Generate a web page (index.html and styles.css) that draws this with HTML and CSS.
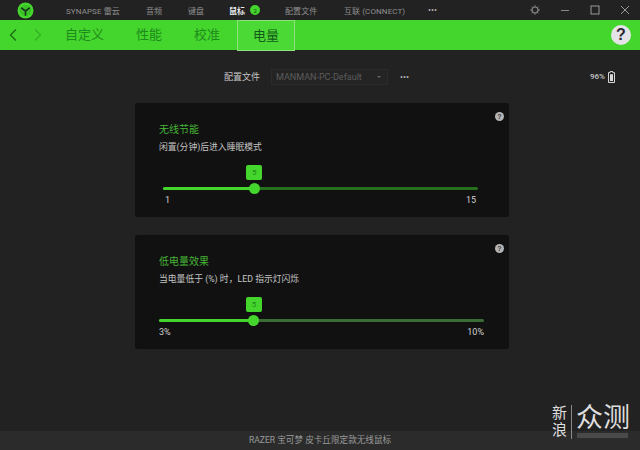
FILE: index.html
```html
<!DOCTYPE html>
<html lang="zh">
<head>
<meta charset="utf-8">
<title>Razer Synapse</title>
<link rel="stylesheet" href="styles.css">
</head>
<body>
<div class="app">
  <header class="titlebar">
    <svg class="logo" width="17" height="17" viewBox="0 0 17 17"><circle cx="8.5" cy="8.5" r="8" fill="#44d62c"/><circle cx="8.5" cy="8.5" r="5.6" fill="#3cc028"/><path d="M8.5 9V13.2M8.5 9L4.6 6.2M8.5 9L12.4 6.2" fill="none" stroke="#17351a" stroke-width="1.6" stroke-linecap="round"/></svg>
    <nav class="topnav">
      <span class="t-synapse">SYNAPSE 雷云</span>
      <span class="t-audio">音频</span>
      <span class="t-keys">键盘</span>
      <span class="t-mouse">鼠标<b class="badge">2</b></span>
      <span class="t-profile">配置文件</span>
      <span class="t-connect">互联 (CONNECT)</span>
      <span class="t-more">•••</span>
    </nav>
    <div class="winctl">
      <svg width="12" height="12" viewBox="0 0 12 12"><circle cx="6" cy="6" r="3" fill="none" stroke="#8a8a8a" stroke-width="1.2"/><path d="M6 1.2V2.8M6 9.2V10.8M1.2 6H2.8M9.2 6H10.8M2.6 2.6L3.7 3.7M8.3 8.3L9.4 9.4M2.6 9.4L3.7 8.3M8.3 3.7L9.4 2.6" stroke="#8a8a8a" stroke-width="1"/></svg>
      <svg width="10" height="10" viewBox="0 0 10 10"><path d="M1 5.5H9" stroke="#8a8a8a" stroke-width="1"/></svg>
      <svg width="10" height="10" viewBox="0 0 10 10"><rect x="1" y="1" width="8" height="8" fill="none" stroke="#9a9a9a" stroke-width="1"/></svg>
      <svg width="10" height="10" viewBox="0 0 10 10"><path d="M1 1L9 9M9 1L1 9" stroke="#9a9a9a" stroke-width="1"/></svg>
    </div>
  </header>

  <div class="greenbar">
    <svg class="arrow" width="8" height="14" viewBox="0 0 8 14"><path d="M7 1.5L1.5 7L7 12.5" fill="none" stroke="#1c6b18" stroke-width="1.3"/></svg>
    <svg class="arrow next" width="8" height="14" viewBox="0 0 8 14"><path d="M1 1.5L6.5 7L1 12.5" fill="none" stroke="#35b026" stroke-width="1.3"/></svg>
    <div class="tabs">
      <span class="tab">自定义</span>
      <span class="tab">性能</span>
      <span class="tab">校准</span>
      <span class="tab active">电量</span>
    </div>
    <span class="help">?</span>
  </div>

  <main class="content">
    <div class="profile-row">
      <span class="profile-label">配置文件</span>
      <div class="select"><span>MANMAN-PC-Default</span><i class="caret"></i></div>
      <span class="dots">•••</span>
      <div class="battery">
        <span>96%</span>
        <svg width="7" height="12" viewBox="0 0 7 12"><path d="M2.2.5H4.8V1.6H6.5V11.5H.5V1.6H2.2Z" fill="none" stroke="#d8d8d8" stroke-width="1"/><rect x="2" y="3.2" width="3" height="6.8" fill="#d8d8d8"/></svg>
      </div>
    </div>

    <section class="card first">
      <span class="q">?</span>
      <h2>无线节能</h2>
      <p>闲置(分钟)后进入睡眠模式</p>
      <div class="slider inset">
        <div class="track">
          <div class="fill" style="width:29%"></div>
          <span class="knob" style="left:29%"></span>
          <span class="bubble" style="left:29%">5</span>
        </div>
        <div class="ends"><span>1</span><span>15</span></div>
      </div>
    </section>

    <section class="card second">
      <span class="q">?</span>
      <h2>低电量效果</h2>
      <p>当电量低于 (%) 时，LED 指示灯闪烁</p>
      <div class="slider">
        <div class="track">
          <div class="fill" style="width:29.2%"></div>
          <span class="knob" style="left:29.2%"></span>
          <span class="bubble" style="left:29.2%">5</span>
        </div>
        <div class="ends"><span>3%</span><span>10%</span></div>
      </div>
    </section>
  </main>

  <footer class="footer">RAZER 宝可梦 皮卡丘限定款无线鼠标</footer>
  <div class="watermark">
    <span class="wm-small">新<br>浪</span>
    <span class="wm-big">众测<i class="wm-bar"></i></span>
  </div>
</div>
</body>
</html>
```

FILE: styles.css
```css
* { box-sizing: border-box; }
html, body { margin: 0; padding: 0; }
body {
  width: 640px;
  height: 450px;
  overflow: hidden;
  background: #222222;
  font-family: "Roboto", "Noto Sans CJK SC", sans-serif;
  color: #c8c8c8;
}
.app { position: relative; width: 640px; height: 450px; display: flex; flex-direction: column; }

.titlebar { height: 20px; display: flex; align-items: center; padding-left: 17px; background: #222; }
.logo { flex: none; margin-top: 1px; }
.topnav { display: flex; align-items: center; font-size: 8px; color: #8f8f8f; margin-left: 32px; letter-spacing: .1px; white-space: nowrap; }
.t-synapse { width: 80px; }
.t-audio { width: 42px; }
.t-keys { width: 41px; }
.t-mouse { width: 56px; color: #e8e8e8; font-weight: 700; display: flex; align-items: center; }
.badge { width: 10px; height: 10px; border-radius: 50%; background: #44d62c; color: #1b5a15; font-size: 6px; font-weight: 500; margin-left: 5px; display: flex; align-items: center; justify-content: center; }
.t-profile { width: 59px; }
.t-connect { width: 84px; }
.t-more { font-size: 9px; letter-spacing: 0; color: #b0b0b0; }
.winctl { margin-left: auto; display: flex; align-items: center; gap: 20px; padding-right: 10px; }
.winctl svg:first-child { margin-right: -1px; }

.greenbar { height: 30px; background: #44d62c; display: flex; align-items: center; position: relative; flex: none; }
.arrow { margin-left: 9px; flex: none; }
.arrow.next { margin-left: 17px; }
.tabs { display: flex; align-items: stretch; height: 31px; margin-left: 23px; align-self: flex-start; }
.tab { font-size: 13px; line-height: 30px; color: #1f8a1c; margin-right: 32px; white-space: nowrap; }
.tab.active { color: #14591a; margin-left: -15px; margin-right: 0; padding: 0 15px; border: 1px solid #8fe07f; background: #4bd935; line-height: 29px; }
.help { margin-left: auto; margin-right: 9px; width: 20px; height: 20px; border-radius: 50%; background: #e4e4e8; color: #2a2a33; font: 900 16px/20px "Liberation Sans", sans-serif; text-align: center; }

.content { flex: 1; display: flex; flex-direction: column; align-items: flex-start; }
.profile-row { width: 640px; height: 53px; display: flex; align-items: center; padding-left: 224px; font-size: 9px; }
.profile-label { width: 47px; color: #c4c4c4; }
.select { width: 117px; height: 16px; border: 1px solid #2b2b2b; background: #242424; color: #5c5c5c; font-size: 9px; display: flex; align-items: center; justify-content: space-between; padding: 0 6px 0 4px; }
.caret { width: 0; height: 0; border: 2px solid transparent; border-top: 2.5px solid #666; border-bottom: 0; }
.dots { margin-left: 12px; font-size: 9px; color: #b8b8b8; }
.battery { margin-left: auto; padding-right: 25px; display: flex; align-items: center; gap: 3px; color: #c8c8c8; font-size: 8px; font-weight: 500; }

.card { position: relative; width: 374px; height: 114px; margin-left: 135px; background: #111111; border-radius: 2px; padding: 20px 24px 0; flex: none; }
.second { margin-top: 18px; }
.card h2 { margin: 0; font-size: 10px; line-height: 13px; font-weight: 400; color: #46b635; }
.card p { margin: 5px 0 0; font-size: 8.8px; line-height: 13px; color: #c4c4c4; }
.q { position: absolute; right: 5px; top: 9px; width: 9px; height: 9px; border-radius: 50%; background: #b4b4b4; color: #3a3a3a; font: 700 7px/9px "Liberation Sans", sans-serif; text-align: center; }

.slider { margin-top: 33px; }
.slider.inset { margin-left: 4px; margin-right: 7px; }
.second .slider { margin-left: 0; margin-right: 1px; margin-top: 33px; }
.track { position: relative; height: 3px; background: #256f1d; border-radius: 2px; }
.second .track { background: #3a6d34; }
.fill { height: 3px; background: #44d62c; border-radius: 2px; }
.knob { position: absolute; top: -4px; width: 11px; height: 11px; margin-left: -5.5px; border-radius: 50%; background: #44d62c; }
.bubble { position: absolute; top: -22px; width: 16px; height: 15px; margin-left: -8px; background: #44d62c; border-radius: 2px; color: #1f8a1c; font-size: 8px; line-height: 15px; text-align: center; }
.ends { display: flex; justify-content: space-between; font-size: 9px; line-height: 12px; color: #d0d0d0; margin-top: 4px; }
.slider.inset .ends { padding: 0 2px; }

.footer { height: 19px; flex: none; background: #2b2b2b; color: #9a9a9a; font-size: 8.6px; line-height: 19px; text-align: center; }
.watermark { position: absolute; left: 552px; top: 405px; display: flex; align-items: flex-start; color: #dedede; }
.wm-small { font-size: 15px; line-height: 17px; padding-right: 4px; border-right: 1px solid #8a8a8a; }
.wm-big { position: relative; font-size: 27px; line-height: 27px; margin-left: 4px; white-space: nowrap; display: block; }
.wm-bar { position: absolute; left: 1px; right: 2px; top: 28px; height: 5px; background: #4a4a4a; }
```
